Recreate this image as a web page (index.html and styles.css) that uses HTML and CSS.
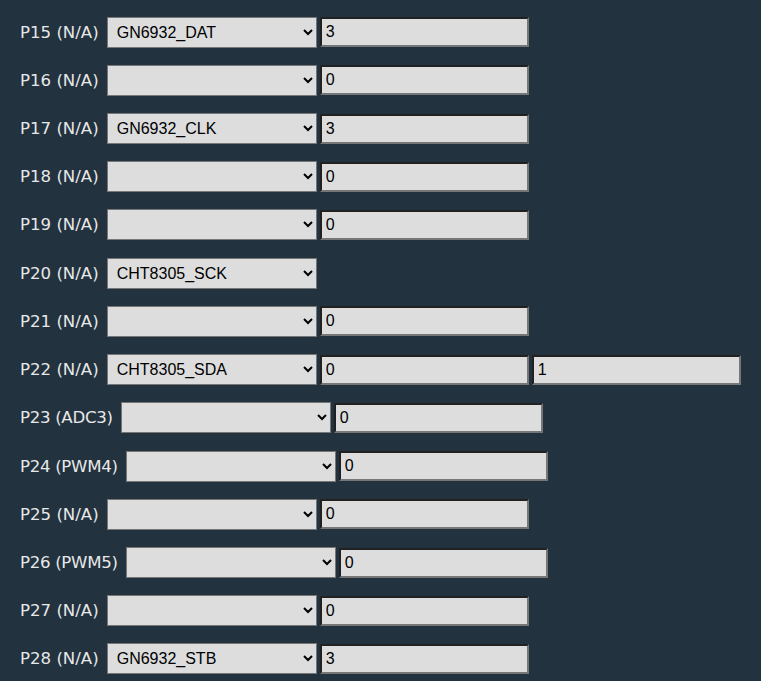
FILE: index.html
```html
<!DOCTYPE html>
<html>
<head>
<meta charset="utf-8">
<link rel="stylesheet" href="styles.css">
</head>
<body>
<div class="list">
  <div class="row"><span class="lbl">P15 (N/A)</span><select class="sel"><option>GN6932_DAT</option></select><input class="inp" value="3"></div>
  <div class="row"><span class="lbl">P16 (N/A)</span><select class="sel"><option></option></select><input class="inp" value="0"></div>
  <div class="row"><span class="lbl">P17 (N/A)</span><select class="sel"><option>GN6932_CLK</option></select><input class="inp" value="3"></div>
  <div class="row"><span class="lbl">P18 (N/A)</span><select class="sel"><option></option></select><input class="inp" value="0"></div>
  <div class="row"><span class="lbl">P19 (N/A)</span><select class="sel"><option></option></select><input class="inp" value="0"></div>
  <div class="row"><span class="lbl">P20 (N/A)</span><select class="sel"><option>CHT8305_SCK</option></select></div>
  <div class="row"><span class="lbl">P21 (N/A)</span><select class="sel"><option></option></select><input class="inp" value="0"></div>
  <div class="row"><span class="lbl">P22 (N/A)</span><select class="sel"><option>CHT8305_SDA</option></select><input class="inp" value="0"><input class="inp" value="1"></div>
  <div class="row"><span class="lbl lbl-wide">P23 (ADC3)</span><select class="sel"><option></option></select><input class="inp" value="0"></div>
  <div class="row"><span class="lbl lbl-wide">P24 (PWM4)</span><select class="sel"><option></option></select><input class="inp" value="0"></div>
  <div class="row"><span class="lbl">P25 (N/A)</span><select class="sel"><option></option></select><input class="inp" value="0"></div>
  <div class="row"><span class="lbl lbl-wide">P26 (PWM5)</span><select class="sel"><option></option></select><input class="inp" value="0"></div>
  <div class="row"><span class="lbl">P27 (N/A)</span><select class="sel"><option></option></select><input class="inp" value="0"></div>
  <div class="row"><span class="lbl">P28 (N/A)</span><select class="sel"><option>GN6932_STB</option></select><input class="inp" value="3"></div>
</div>
</body>
</html>
```

FILE: styles.css
```css
html, body {
  background: #22323f;
}
body {
  margin: 8px;
  font-family: "DejaVu Sans", Verdana, sans-serif;
  color: #e8e8e8;
}
.list {
  padding-left: 12px;
}
.row {
  height: 48.23px;
  display: flex;
  align-items: center;
}
.lbl {
  font-size: 16.6px;
  margin-right: 8px;
  white-space: nowrap;
}
.lbl-wide {
  letter-spacing: -0.3px;
}
.sel {
  width: 210px;
  height: 31px;
  background-color: #dddddd;
  color: #000;
  border: 1px solid #767676;
  border-radius: 0;
  font-family: "Liberation Sans", Arial, sans-serif;
  font-size: 16px;
  padding: 0 0 0 5px;
  margin: 0 3px 0 0;
}
.inp {
  width: 209px;
  height: 30px;
  box-sizing: border-box;
  background-color: #dddddd;
  color: #000;
  border: 2px inset #767676;
  font-family: "Liberation Sans", Arial, sans-serif;
  font-size: 16px;
  padding: 1px 4px;
  margin: 0 3px 0 0;
}
```
